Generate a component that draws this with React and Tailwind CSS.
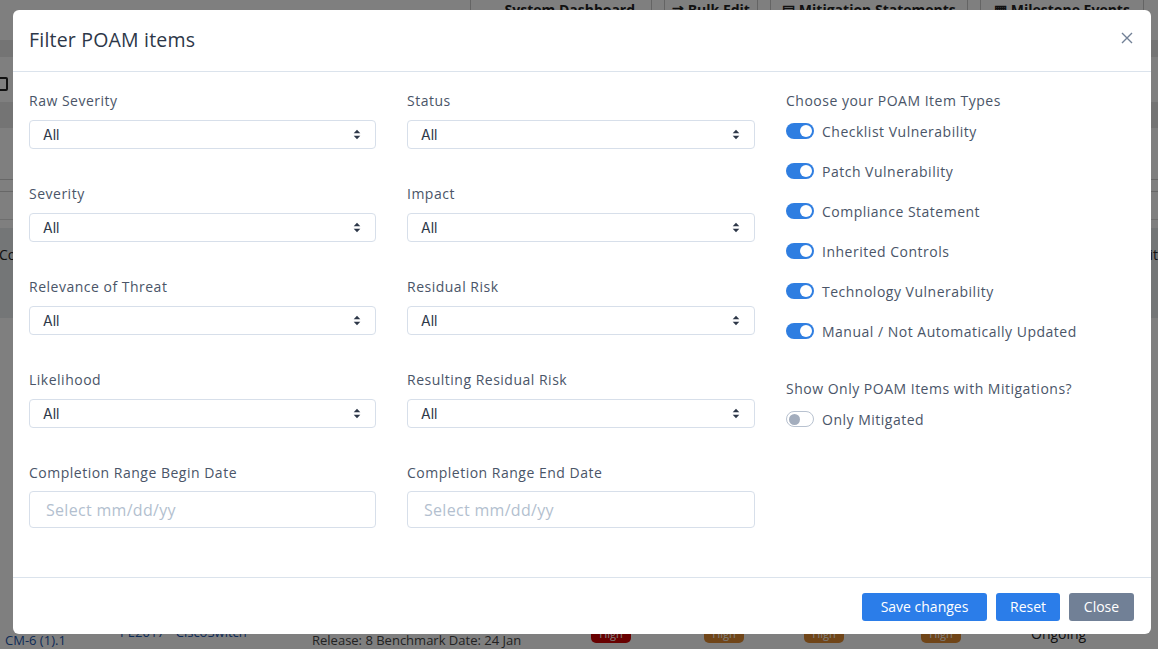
import React from "react";

const F = { fontFamily: '"Open Sans", "Liberation Sans", sans-serif' };

function Caret() {
  return (
    <svg width="8" height="11" viewBox="0 0 8 11" className="shrink-0">
      <path d="M4 0.8 L7.3 4.3 L0.7 4.3 Z" fill="#2d3748" />
      <path d="M4 10.2 L7.3 6.7 L0.7 6.7 Z" fill="#2d3748" />
    </svg>
  );
}

function Label({ children, className = "" }) {
  return (
    <div className={`text-[14px] leading-[20px] text-[#4a5568] tracking-[0.5px] ${className}`}>{children}</div>
  );
}

function SelectField({ label }) {
  return (
    <div className="flex flex-col">
      <Label>{label}</Label>
      <div className="mt-[9px] h-[29px] flex items-center justify-between border border-[#d7dfea] rounded-[4px] pl-[13px] pr-[14px] bg-white">
        <span className="text-[14px] text-[#2d3748]" style={{ fontFamily: 'Inter, "Liberation Sans", sans-serif' }}>All</span>
        <Caret />
      </div>
    </div>
  );
}

function DateField({ label }) {
  return (
    <div className="flex flex-col">
      <Label>{label}</Label>
      <div className="mt-[8px] h-[37px] flex items-center border border-[#d7dfea] rounded-[4px] pl-[16px] bg-white">
        <span className="text-[16px] text-[#b3bfcf] tracking-[0.3px]">Select mm/dd/yy</span>
      </div>
    </div>
  );
}

function Toggle({ on, label }) {
  return (
    <div className="flex items-center h-[20px]">
      {on ? (
        <div className="w-[28px] h-[16px] rounded-full bg-[#2f7ee1] flex items-center justify-end pr-[2px]">
          <div className="w-[12px] h-[12px] rounded-full bg-white" />
        </div>
      ) : (
        <div className="w-[28px] h-[16px] rounded-full bg-white border border-[#b8c2d0] flex items-center pl-[2px]">
          <div className="w-[11px] h-[11px] rounded-full bg-[#a3adbd]" />
        </div>
      )}
      <span className="ml-[8px] text-[14px] text-[#4a5568] tracking-[0.5px]">{label}</span>
    </div>
  );
}

function BgButton({ children, w }) {
  return (
    <div className={`h-[30px] border border-[#c8c8c8] rounded-[3px] flex items-end justify-center pb-[1px] text-[14px] font-bold text-[#222] ${w}`}>
      {children}
    </div>
  );
}

function Badge({ color }) {
  return (
    <span className={`inline-flex items-center justify-center w-[40px] h-[18px] rounded-[5px] text-[11px] text-white ${color}`}>High</span>
  );
}

export default function App() {
  return (
    <div className="relative w-[1158px] h-[649px] overflow-hidden bg-white" style={F}>
      {/* background page */}
      <div className="flex flex-col h-full">
        <div className="flex items-start gap-[12px] pl-[470px] -mt-[8px]">
          <BgButton w="w-[182px]">▬ System Dashboard</BgButton>
          <BgButton w="w-[94px]">⇄ Bulk Edit</BgButton>
          <BgButton w="w-[198px]">▤ Mitigation Statements</BgButton>
          <BgButton w="w-[164px]">▦ Milestone Events</BgButton>
        </div>
        <div className="h-[17px] mt-[18px] bg-[#e8e8e8]" />
        <div className="h-[18px]" />
        <div className="flex items-center h-[17px]">
          <div className="w-[12px] h-[14px] border-2 border-[#222] rounded-[2px] -ml-[4px]" />
        </div>
        <div className="h-[10px]" />
        <div className="h-[26px] bg-[#e8e8e8]" />
        <div className="h-[52px] border-b border-[#cfcfcf]" />
        <div className="h-[12px] border-b border-[#cfcfcf]" />
        <div className="h-[28px] border-b border-[#dcdcdc]" />
        <div className="h-[8px]" />
        <div className="h-[90px] bg-[#e9ecef] flex items-start justify-between pt-[16px]">
          <span className="text-[14px] text-[#222] -ml-[1px]">Compliance</span>
          <span className="text-[14px] text-[#222]">Limit</span>
        </div>
        <div className="flex-1" />
        <div className="h-[26px] flex items-start text-[13px] leading-[16px]">
          <span className="w-[116px] pl-[5px] text-[#1a56b0] mt-[9px]">CM-6 (1).1</span>
          <span className="w-[196px] pl-[4px] text-[#1a56b0] mt-[1px]">PE2017 - CiscoSwitch</span>
          <span className="w-[279px] text-[#444] mt-[9px]">Release: 8 Benchmark Date: 24 Jan</span>
          <div className="w-[113px] mt-[2px]"><Badge color="bg-[#d00000]" /></div>
          <div className="w-[100px] mt-[2px]"><Badge color="bg-[#e08a30]" /></div>
          <div className="w-[117px] mt-[2px]"><Badge color="bg-[#e08a30]" /></div>
          <div className="w-[110px] mt-[2px]"><Badge color="bg-[#e08a30]" /></div>
          <span className="text-[14px] text-[#222] mt-[3px]">Ongoing</span>
        </div>
      </div>

      {/* overlay */}
      <div className="absolute inset-0 bg-black/50" />

      {/* modal */}
      <div className="absolute left-[13px] top-[10px] w-[1138px] h-[624px] bg-white rounded-[6px] flex flex-col">
        <div className="h-[62px] flex items-center justify-between pl-[16px] pr-[18px] border-b border-[#dbe3ec]">
          <h2 className="text-[19.5px] font-medium text-[#2d3748] tracking-[0.2px] mt-[-2px]">Filter POAM items</h2>
          <svg width="12" height="12" viewBox="0 0 12 12" className="mt-[-6px]">
            <path d="M1 1 L11 11 M11 1 L1 11" stroke="#718096" strokeWidth="1.4" />
          </svg>
        </div>

        <div className="flex-1 grid grid-cols-[347px_348px_1fr] gap-x-[31px] pl-[16px] pr-[16px] pt-[19px]">
          <div className="flex flex-col gap-[35px]">
            <SelectField label="Raw Severity" />
            <SelectField label="Severity" />
            <SelectField label="Relevance of Threat" />
            <SelectField label="Likelihood" />
            <DateField label="Completion Range Begin Date" />
          </div>
          <div className="flex flex-col gap-[35px]">
            <SelectField label="Status" />
            <SelectField label="Impact" />
            <SelectField label="Residual Risk" />
            <SelectField label="Resulting Residual Risk" />
            <DateField label="Completion Range End Date" />
          </div>
          <div className="flex flex-col">
            <Label>Choose your POAM Item Types</Label>
            <div className="mt-[10px] flex flex-col gap-[20px]">
              <Toggle on label="Checklist Vulnerability" />
              <Toggle on label="Patch Vulnerability" />
              <Toggle on label="Compliance Statement" />
              <Toggle on label="Inherited Controls" />
              <Toggle on label="Technology Vulnerability" />
              <Toggle on label="Manual / Not Automatically Updated" />
            </div>
            <Label className="mt-[38px]">Show Only POAM Items with Mitigations?</Label>
            <div className="mt-[10px]">
              <Toggle label="Only Mitigated" />
            </div>
          </div>
        </div>

        <div className="h-[57px] border-t border-[#dbe3ec] flex items-center justify-end gap-[9px] pr-[17px] pt-[1px]">
          <button className="h-[28px] w-[125px] rounded-[3px] bg-[#2b7de9] text-white text-[14px]">Save changes</button>
          <button className="h-[28px] w-[64px] rounded-[3px] bg-[#2b7de9] text-white text-[14px]">Reset</button>
          <button className="h-[28px] w-[65px] rounded-[3px] bg-[#718096] text-white text-[14px]">Close</button>
        </div>
      </div>
    </div>
  );
}
